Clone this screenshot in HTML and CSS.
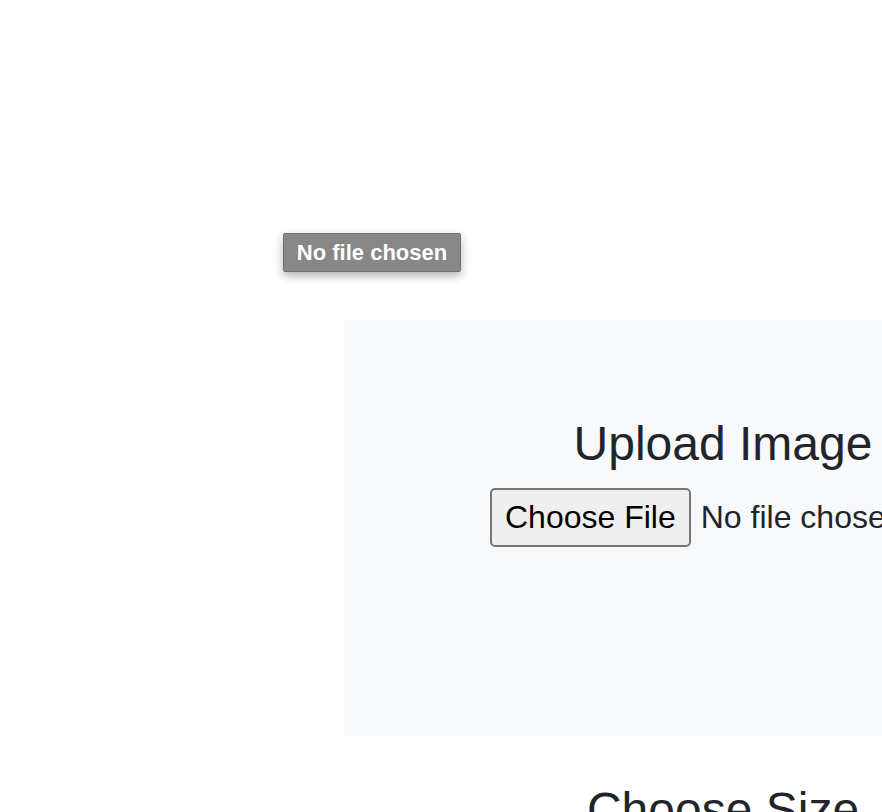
FILE: index.html
```html
<!DOCTYPE html>
<html lang="en">
<head>
<meta charset="utf-8">
<title>Upload Image</title>
<link rel="stylesheet" href="styles.css">
</head>
<body>
<div class="page">
  <div class="layout">
    <aside class="sidebar"></aside>
    <main class="main">
      <section class="upload-panel">
        <h2 class="panel-title">Upload Image</h2>
        <div class="file-row">
          <button class="file-button" type="button">Choose File</button>
          <span class="file-name">No file chosen</span>
        </div>
      </section>
      <h2 class="section-title">Choose Size</h2>
    </main>
  </div>
  <div class="tooltip">No file chosen</div>
</div>
</body>
</html>
```
FILE: styles.css
```css
html, body {
  margin: 0;
  padding: 0;
  background: #ffffff;
}

body {
  font-family: "Liberation Sans", Arial, Helvetica, sans-serif;
  color: #212529;
}

.page {
  position: relative;
  width: 100vw;
  height: 100vh;
  overflow: hidden;
}

.layout {
  display: flex;
  width: 1102px;
  padding-top: 320px;
}

.sidebar {
  flex: 0 0 344px;
}

.main {
  flex: 0 0 758px;
  display: flex;
  flex-direction: column;
}

.upload-panel {
  background: #f8f9fa;
  height: 416px;
  box-sizing: border-box;
  padding-top: 95px;
  display: flex;
  flex-direction: column;
  align-items: center;
}

.panel-title,
.section-title {
  margin: 0;
  font-size: 48px;
  font-weight: 400;
  line-height: 1.2;
  color: #212529;
  text-align: center;
}

.panel-title {
  margin-bottom: 15px;
}

.section-title {
  margin-top: 45px;
}

.file-row {
  display: flex;
  align-items: center;
  gap: 10px;
  width: 466px;
  white-space: nowrap;
}

.file-button {
  font-family: "Liberation Sans", Arial, Helvetica, sans-serif;
  font-size: 32px;
  color: #000000;
  background: #efefef;
  border: 2px solid #767676;
  border-radius: 5px;
  height: 59px;
  padding: 0 13px;
  line-height: 1;
  box-sizing: border-box;
}

.file-name {
  font-size: 32px;
  color: #212529;
}

.tooltip {
  position: absolute;
  left: 283px;
  top: 233px;
  width: 178px;
  height: 39px;
  box-sizing: border-box;
  padding-top: 1px;
  display: flex;
  align-items: center;
  justify-content: center;
  background: #878787;
  border: 1px solid #6e6e6e;
  border-radius: 2px;
  box-shadow: 0 4px 10px rgba(0, 0, 0, 0.3);
  color: #ffffff;
  font-size: 22px;
  font-weight: 700;
  white-space: nowrap;
}
```
